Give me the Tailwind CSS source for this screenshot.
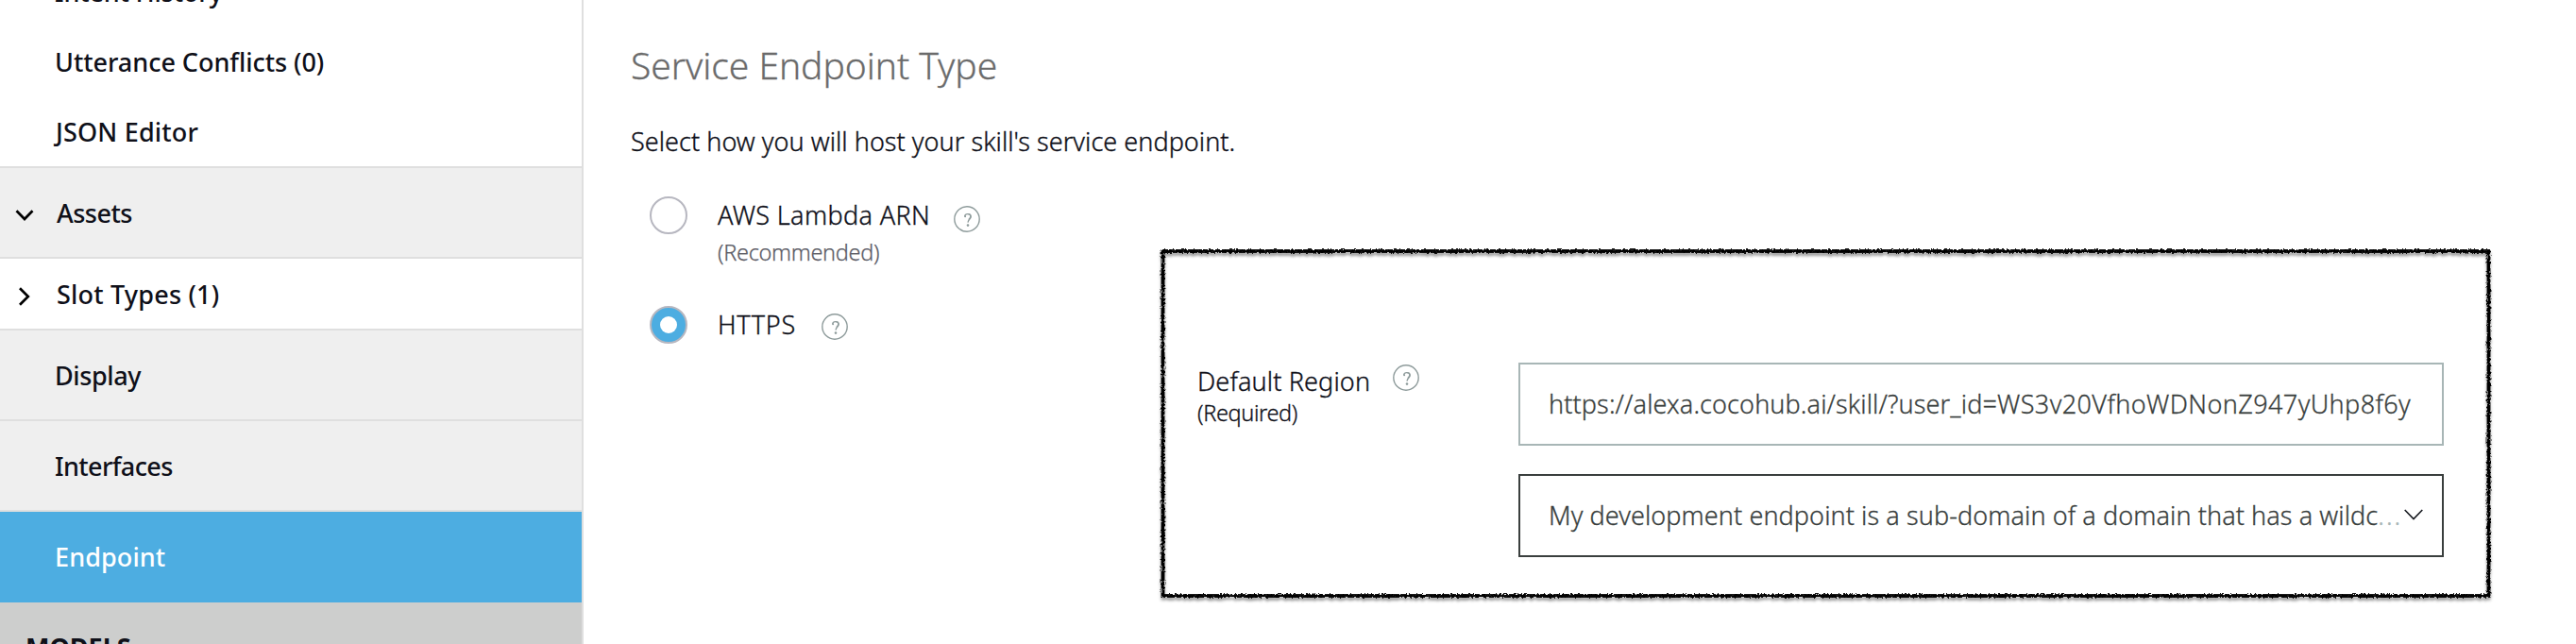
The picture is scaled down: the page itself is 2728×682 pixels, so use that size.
<!DOCTYPE html>
<html lang="en">
<head>
<meta charset="utf-8">
<title>Service Endpoint Type</title>
<script src="https://cdn.jsdelivr.net/npm/@tailwindcss/browser@4"></script>
</head>
<body class="h-[682px] w-[2728px] overflow-hidden bg-white font-['Noto_Sans',sans-serif] text-[27px] leading-[40px] text-[#0f1019]">
<svg class="hidden">
  <symbol id="help" viewBox="0 0 28 28">
    <circle cx="14" cy="14" r="13.2" fill="none" stroke="#8f9c9c" stroke-width="1.4"/>
    <path d="M11.7 11.2C11.7 9.5 13 8.6 14.7 8.6C17.2 8.6 18.2 9.9 18.2 11.4C18.2 13.8 15.3 14.2 15 17.6" fill="none" stroke="#8f9c9c" stroke-width="1.3"/>
    <path d="M15.4 8.6C17.2 8.8 18 9.9 17.8 11.6C17.6 13 16.4 13.8 15.9 14.7" fill="none" stroke="#8f9c9c" stroke-width="1.4"/>
    <circle cx="12.1" cy="11.3" r="1" fill="#8f9c9c"/>
    <circle cx="15" cy="20.6" r="1.3" fill="#8f9c9c"/>
  </symbol>
</svg>
<div class="flex h-full">
  <aside class="h-full w-[618px] shrink-0 overflow-hidden border-r-2 border-[#dfdfdf] font-medium">
    <nav class="flex flex-col">
      <div class="flex h-[178px] flex-col justify-end gap-[34px] border-b-2 border-[#dfdfdf] pb-[16px] pl-[58px] whitespace-nowrap">
        <div class="shrink-0 tracking-[-0.15px]">Intent History</div>
        <div class="shrink-0 tracking-[-0.03px]">Utterance Conflicts (0)</div>
        <div class="shrink-0 pl-[1px] tracking-[0.17px]">JSON Editor</div>
      </div>
      <div class="flex h-[96px] items-center border-b-2 border-[#dfdfdf] bg-[#efefef] pt-[2px] pl-[16px]">
        <svg class="mt-[4px] mr-[24px] h-[12px] w-[20px]" viewBox="0 0 20 12" fill="none" stroke="#000" stroke-width="2.7"><path d="M1.5 1.2L10 10L18.5 1.2"/></svg>
        <span class="tracking-[-0.5px]">Assets</span>
      </div>
      <div class="flex h-[76px] items-center border-b-2 border-[#dfdfdf] bg-white pt-[2px] pl-[19px]">
        <svg class="mt-[4px] mr-[28px] h-[20px] w-[13px]" viewBox="0 0 13 20" fill="none" stroke="#000" stroke-width="2.7"><path d="M2 1.2L10.8 10L2 18.8"/></svg>
        <span class="tracking-[0.2px]">Slot Types (1)</span>
      </div>
      <div class="flex h-[96px] items-center border-b-2 border-[#dfdfdf] bg-[#efefef] pt-[2px] pl-[58px] tracking-[-0.4px]">Display</div>
      <div class="flex h-[96px] items-center border-b-2 border-[#dfdfdf] bg-[#efefef] pt-[2px] pl-[58px] tracking-[-0.6px]">Interfaces</div>
      <div class="flex h-[96px] items-center bg-[#4dade1] pl-[58px] tracking-[0.1px] text-white">Endpoint</div>
      <div class="h-[60px] bg-[#cdcecd] pt-[27px] pl-[27px] font-bold">MODELS</div>
    </nav>
  </aside>
  <main class="flex-1 pl-[50px] font-light whitespace-nowrap">
    <h1 class="pt-[39px] text-[39px] leading-[60px] tracking-[-0.05px] text-[#6b6b6b] [-webkit-text-stroke:0.3px]">Service Endpoint Type</h1>
    <p class="mt-[31px] tracking-[0.05px] [-webkit-text-stroke:0.35px]">Select how you will host your skill's service endpoint.</p>
    <div class="mt-[38px] flex">
      <div class="w-[561px] shrink-0 pl-[20px]">
        <div class="flex">
          <span class="mr-[32px] h-[40px] w-[40px] rounded-full border-2 border-[#b7b7c0]"></span>
          <div>
            <div class="flex items-start">
              <span class="tracking-[0.36px] [-webkit-text-stroke:0.35px]">AWS Lambda ARN</span>
              <svg class="mt-[10px] ml-[25px] h-[28px] w-[28px]"><use href="#help"/></svg>
            </div>
            <div class="mt-[-1px] text-[23.5px] tracking-[-0.32px] text-[#5c5c66] [-webkit-text-stroke:0.25px]">(Recommended)</div>
          </div>
        </div>
        <div class="mt-[37px] flex">
          <span class="mr-[32px] flex h-[40px] w-[40px] items-center justify-center rounded-full border-2 border-[#b7b7c0] bg-[#4dade1]"><span class="h-[18px] w-[18px] rounded-full bg-white"></span></span>
          <span class="tracking-[0.7px] [-webkit-text-stroke:0.35px]">HTTPS</span>
          <svg class="mt-[8px] ml-[27px] h-[28px] w-[28px]"><use href="#help"/></svg>
        </div>
      </div>
      <section class="relative mt-[56px] flex h-[370px] w-[1409px] pt-[120px] pl-[39px]">
        <svg class="absolute top-[-10px] left-[-10px] h-[400px] w-[1430px]" viewBox="0 0 1430 400" fill="none">
          <defs>
            <filter id="rough" filterUnits="userSpaceOnUse" x="0" y="0" width="1430" height="400">
              <feTurbulence type="fractalNoise" baseFrequency="0.45" numOctaves="2" seed="4" result="n"/>
              <feDisplacementMap in="SourceGraphic" in2="n" scale="4" xChannelSelector="R" yChannelSelector="G" result="d"/>
              <feDropShadow in="d" dx="0" dy="3" stdDeviation="1.8" flood-color="#000" flood-opacity="0.4"/>
            </filter>
          </defs>
          <rect x="12.5" y="12" width="1404" height="365" stroke="#000" stroke-width="3.8" filter="url(#rough)"/>
        </svg>
        <div class="w-[340px] shrink-0">
          <div class="flex items-start">
            <span class="tracking-[0.15px] [-webkit-text-stroke:0.35px]">Default Region</span>
            <svg class="mt-[2px] ml-[24px] h-[28px] w-[28px]"><use href="#help"/></svg>
          </div>
          <div class="mt-[-3px] text-[23.5px] leading-[32px] tracking-[-0.35px] [-webkit-text-stroke:0.3px]">(Required)</div>
        </div>
        <div class="flex w-[980px] shrink-0 flex-col gap-[30px] text-[#3a3f3e] [-webkit-text-stroke:0.3px]">
          <div class="flex h-[88px] items-center border-2 border-[#a8b6b6] px-[30px]">
            <div class="w-full overflow-hidden"><span class="tracking-[0.12px]">https://alexa.cocohub.ai/skill/?user_id=</span><span class="tracking-[0.4px]">WS3v20VfhoWDNonZ947yUhp8f6y</span></div>
          </div>
          <div class="flex h-[88px] items-center border-2 border-[#3a3f3e] pl-[30px]">
            <span class="tracking-[0.09px]">My development endpoint is a sub-domain of a domain that has a wildc</span><span class="tracking-[2px] text-[#a8b6b6]">...</span>
            <svg class="mt-[-2px] ml-[2px] h-[12px] w-[20px]" viewBox="0 0 20 12" fill="none" stroke="#16191f" stroke-width="1.6"><path d="M.7 1L10 10.5L19.3 1"/></svg>
          </div>
        </div>
      </section>
    </div>
  </main>
</div>
</body>
</html>
